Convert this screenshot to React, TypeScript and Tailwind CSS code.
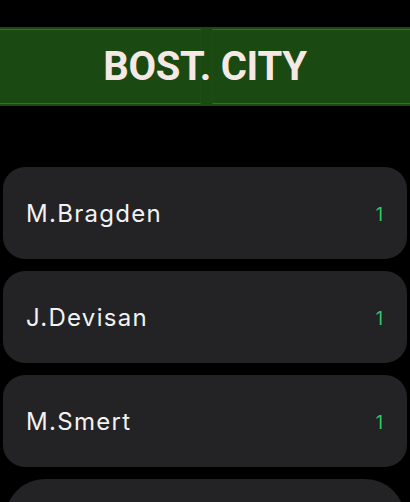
const players = [
  { name: 'M.Bragden', goals: 1 },
  { name: 'J.Devisan', goals: 1 },
  { name: 'M.Smert', goals: 1 },
];

export default function App() {
  return (
    <div className="w-[410px] h-[502px] bg-black overflow-hidden" style={{ fontFamily: 'Inter, "Open Sans", sans-serif' }}>
      {/* Team banner */}
      <div className="mt-[27px] h-[79px] bg-[#1a4a12] relative flex py-[2px] gap-[11px]">
        <div className="w-[201px] border-y border-r border-y-[#3d6a34] border-r-[#1d4d15]" />
        <div className="flex-1 border-y border-l border-y-[#3d6a34] border-l-[#1d4d15]" />
        <div className="absolute inset-0 flex items-center justify-center pt-[1px]">
          <span
            className="text-[40px] font-bold text-[#f6e8e4] tracking-[-0.3px] leading-none"
            style={{ fontFamily: 'Roboto, "Liberation Sans", sans-serif' }}
          >
            BOST. CITY
          </span>
        </div>
      </div>

      {/* Scorers */}
      <div className="mt-[61px] px-[3px] flex flex-col gap-[12px]">
        {players.map((p) => (
          <div key={p.name} className="h-[92px] rounded-[22px] bg-[#232325] flex items-center justify-between pl-[23px] pr-[24px]">
            <span className="text-[24px] text-[#f2f2f2] tracking-[1.3px] pt-[2px]">{p.name}</span>
            <span className="text-[18px] text-[#2ec866] pt-[2px]">{p.goals}</span>
          </div>
        ))}
        <div className="h-[92px] mx-[2px] rounded-t-[40px] bg-[#232325]" />
      </div>
    </div>
  );
}
